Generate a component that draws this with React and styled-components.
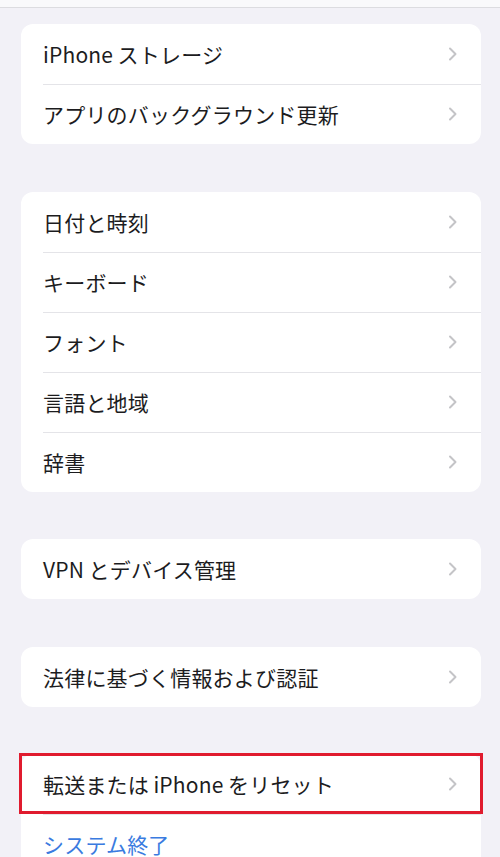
import React from "react";
import styled, { createGlobalStyle } from "styled-components";

const Global = createGlobalStyle`
  html, body {
    margin: 0;
    padding: 0;
    background: #f2f1f7;
    font-family: "Noto Sans CJK JP", "Noto Sans", sans-serif;
  }
`;

const Page = styled.div`
  width: 500px;
  height: 857px;
  overflow: hidden;
  background: #f2f1f7;
`;

const TopBar = styled.div`
  height: 7px;
  background: #f9f9fb;
  border-bottom: 1px solid #dcdce0;
`;

const List = styled.div`
  display: flex;
  flex-direction: column;
  gap: 47.5px;
  padding: 16px 19px 0 21px;
`;

const Card = styled.div`
  background: #ffffff;
  border-radius: 12px;
`;

const Row = styled.div`
  position: relative;
  height: 60px;
  display: flex;
  align-items: center;
  padding: 0 23px 0 22px;

  & + &::before {
    content: "";
    position: absolute;
    top: 0;
    left: 22px;
    right: 0;
    height: 1px;
    background: #e4e4e8;
  }
`;

const Label = styled.span`
  flex: 1;
  font-size: 21px;
  font-weight: 400;
  color: ${(p) => (p.$action ? "#3a7be0" : "#1c1c1e")};
  letter-spacing: 0.2px;
`;

const Highlight = styled.div`
  position: absolute;
  inset: -1px -2px 0 -2px;
  border: 3px solid #e01b2e;
  z-index: 2;
`;

const Chevron = () => (
  <svg width="10" height="16" viewBox="0 0 10 16" fill="none">
    <polyline
      points="2,2.5 7.5,8 2,13.5"
      stroke="#c4c4c7"
      strokeWidth="2"
      strokeLinecap="round"
      strokeLinejoin="round"
    />
  </svg>
);

const Item = ({ label, highlight }) => (
  <Row>
    <Label>{label}</Label>
    <Chevron />
    {highlight && <Highlight />}
  </Row>
);

export default function App() {
  return (
    <Page>
      <Global />
      <TopBar />
      <List>
        <Card>
          <Item label={"iPhone\u2009ストレージ"} />
          <Item label="アプリのバックグラウンド更新" />
        </Card>
        <Card>
          <Item label="日付と時刻" />
          <Item label="キーボード" />
          <Item label="フォント" />
          <Item label="言語と地域" />
          <Item label="辞書" />
        </Card>
        <Card>
          <Item label={"VPN\u2009とデバイス管理"} />
        </Card>
        <Card>
          <Item label="法律に基づく情報および認証" />
        </Card>
        <Card>
          <Item label={"転送または\u2009iPhone\u2009をリセット"} highlight />
          <Row>
            <Label $action>システム終了</Label>
          </Row>
        </Card>
      </List>
    </Page>
  );
}
